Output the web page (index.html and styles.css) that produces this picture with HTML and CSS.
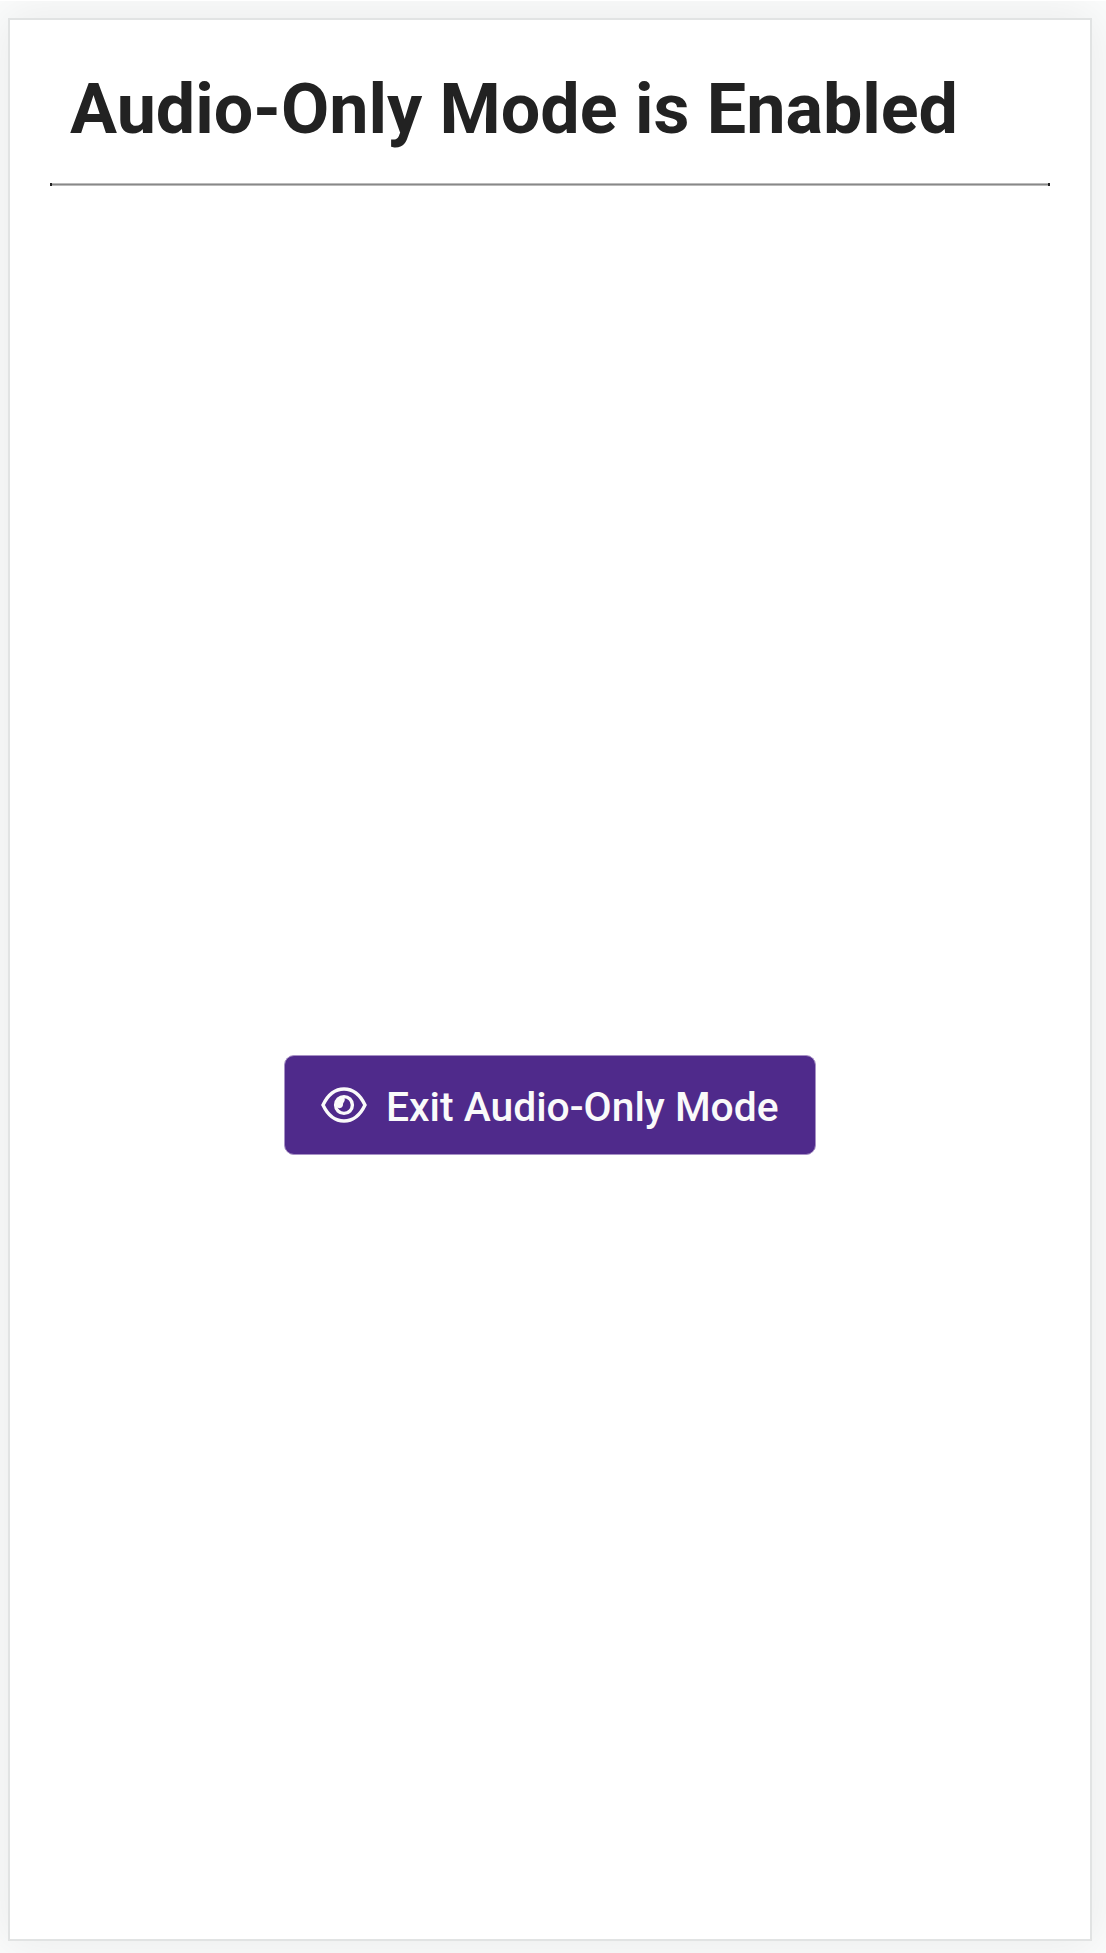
FILE: index.html
```html
<!DOCTYPE html>
<html lang="en">
<head>
<meta charset="utf-8">
<title>Audio-Only Mode</title>
<link rel="stylesheet" href="styles.css">
</head>
<body>
<main class="card">
  <header class="card-header"><h1 class="title">Audio-Only Mode is Enabled</h1></header>
  <div class="rule"></div>
  <section class="card-body">
    <button class="exit-button" type="button">
      <svg class="eye" viewBox="0 0 46 36" aria-hidden="true">
        <path class="line" d="M2 18C7 7.500 14.500 2 23 2s16 5.500 21 16C39 28.500 31.500 34 23 34S7 28.500 2 18Z"/>
        <circle class="line" cx="23" cy="18" r="8.400"/>
        <path class="glint" d="M23 10c.8 1.300 1 2.700.5 4-.5 1.200-1.300 1.800-1.500 3 .2 1.700-.6 3.200-2 3.800-1.500.7-3.300.2-4.500-.8C14 15 17 10 23 10Z"/>
      </svg>
      <span>Exit Audio-Only Mode</span>
    </button>
  </section>
</main>
</body>
</html>
```
FILE: styles.css
```css
* {
  box-sizing: border-box;
}

body {
  margin: 0;
  height: 1953px;
  padding: 17px 14px 12px 8px;
  background: #fcfdfd;
  border-top: 1px solid #fff;
  font-family: Roboto, "Liberation Sans", sans-serif;
  overflow: hidden;
}

.card {
  height: 100%;
  padding: 0 40px;
  display: flex;
  flex-direction: column;
  background: #fff;
  border: 2px solid #e1e3e3;
  box-shadow: 0 0 50px 8px rgba(0, 20, 20, 0.07);
}

.card-header {
  height: 163px;
  padding: 48px 20px 0;
}

.rule {
  height: 3px;
  border: solid #222;
  border-width: 0 2px;
  background: linear-gradient(#bbb 1px, #888 1px 2px, #bbb 2px);
}

.title {
  margin: 0;
  color: #222;
  font-size: 70px;
  font-weight: 700;
  line-height: 82px;
  white-space: nowrap;
}

.card-body {
  flex: 1;
  display: flex;
  align-items: flex-start;
  justify-content: center;
  padding-top: 869px;
}

.exit-button {
  width: 532px;
  height: 100px;
  padding: 4px 0 0 36px;
  display: flex;
  align-items: center;
  gap: 19px;
  border: 1px solid #a791c5;
  border-radius: 10px;
  background: #4f2a8b;
  color: #fafafa;
  font: 500 40.8px/48px Roboto, "Liberation Sans", sans-serif;
  white-space: nowrap;
}

.eye {
  width: 46px;
  height: 36px;
  margin-top: -4px;
}

.line {
  fill: none;
  stroke: currentColor;
  stroke-width: 3.4;
}

.glint {
  fill: currentColor;
}
```
